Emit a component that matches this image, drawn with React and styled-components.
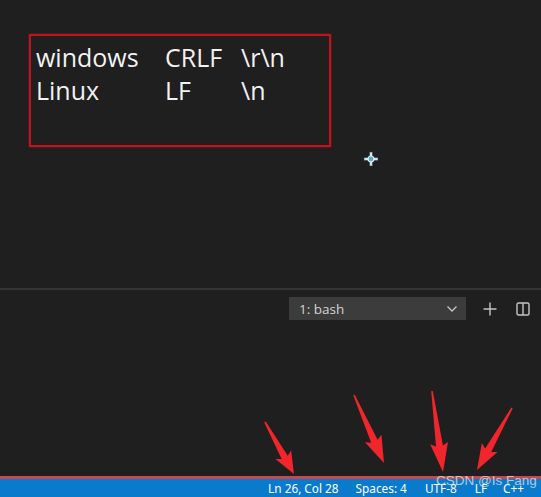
import React from "react";
import styled, { createGlobalStyle } from "styled-components";

const Global = createGlobalStyle`
  html, body { margin: 0; padding: 0; background: #1f1f1f; }
  #root { height: 100vh; }
`;

const Screen = styled.div`
  position: relative;
  height: 100vh;
  display: flex;
  flex-direction: column;
  background: #1f1f1f;
  overflow: hidden;
`;

const Editor = styled.div`
  height: 288px;
  padding: 34px 0 0 29px;
  box-sizing: border-box;
`;

const NoteBox = styled.div`
  width: 302px;
  height: 113px;
  box-sizing: border-box;
  border: 2px solid #c4121c;
  box-shadow: 0 0 2px rgba(200, 20, 30, 0.6);
  padding: 5px 0 0 5px;
  display: grid;
  grid-template-columns: 129px 76px auto;
  grid-auto-rows: 33px;
  font-family: "Open Sans", "Noto Sans", sans-serif;
  font-size: 25px;
  color: #f2f2f2;
  line-height: 33px;
`;

const Panel = styled.div`
  flex: 1;
  border-top: 2px solid #353535;
  display: flex;
  flex-direction: column;
`;

const Toolbar = styled.div`
  display: flex;
  align-items: center;
  justify-content: flex-end;
  padding: 7px 10px 0 0;
`;

const Dropdown = styled.div`
  width: 177px;
  height: 23px;
  background: #3c3c3c;
  display: flex;
  align-items: center;
  justify-content: space-between;
  padding: 0 8px 0 10px;
  box-sizing: border-box;
  font-family: "Open Sans", "Noto Sans", sans-serif;
  font-size: 13.5px;
  color: #d4d4d4;
  margin-right: 16px;
`;

const IconBtn = styled.div`
  width: 16px;
  height: 16px;
  display: flex;
  align-items: center;
  justify-content: center;
  margin-left: ${(p) => p.gap || 0}px;
`;

const StatusBar = styled.div`
  height: 18px;
  border-top: 3px solid #c8474c;
  background: #0a7acc;
  display: flex;
  align-items: center;
  justify-content: flex-end;
  padding-right: 17px;
  font-family: "Noto Sans", "Open Sans", sans-serif;
  font-size: 11.8px;
  color: #ffffff;
`;

const StatusItem = styled.span`
  margin-left: ${(p) => p.gap}px;
  white-space: nowrap;
`;

const Watermark = styled.div`
  position: absolute;
  left: 436px;
  top: 473px;
  font-family: "Liberation Sans", Arial, sans-serif;
  font-size: 13.5px;
  color: rgba(230, 230, 230, 0.75);
  white-space: nowrap;
`;

const Overlay = styled.svg`
  position: absolute;
  left: 0;
  top: 0;
  pointer-events: none;
`;

const Arrow = ({ tail, tip }) => {
  const dx = tip[0] - tail[0];
  const dy = tip[1] - tail[1];
  const L = Math.hypot(dx, dy);
  const ang = (Math.atan2(dy, dx) * 180) / Math.PI;
  const h = L * 0.68;
  const pts = [
    [0, -0.8],
    [h, -3.5],
    [h - 3, -9],
    [L, 0],
    [h - 3, 9],
    [h, 3.5],
    [0, 0.8],
  ]
    .map((p) => p.join(","))
    .join(" ");
  return (
    <polygon
      points={pts}
      fill="#f0262c"
      transform={`translate(${tail[0]} ${tail[1]}) rotate(${ang})`}
    />
  );
};

const Cursor = () => (
  <g transform="translate(371 159)">
    <rect x="-7" y="-1.5" width="14" height="3" fill="#cfe6ee" stroke="#2a3a40" strokeWidth="0.6" />
    <rect x="-1.5" y="-7" width="3" height="14" fill="#cfe6ee" stroke="#2a3a40" strokeWidth="0.6" />
    <circle r="3" fill="#5fa8c0" stroke="#e6f4f8" strokeWidth="1.2" />
  </g>
);

export default function App() {
  return (
    <Screen>
      <Global />
      <Editor>
        <NoteBox>
          <span>windows</span>
          <span>CRLF</span>
          <span>\r\n</span>
          <span>Linux</span>
          <span>LF</span>
          <span>\n</span>
        </NoteBox>
      </Editor>
      <Panel>
        <Toolbar>
          <Dropdown>
            <span>1: bash</span>
            <svg width="12" height="8" viewBox="0 0 12 8">
              <path d="M1.5 1.5 L6 6 L10.5 1.5" fill="none" stroke="#c5c5c5" strokeWidth="1.3" />
            </svg>
          </Dropdown>
          <IconBtn>
            <svg width="16" height="16" viewBox="0 0 16 16">
              <path d="M8 1.5 V14.5 M1.5 8 H14.5" stroke="#c5c5c5" strokeWidth="1.4" />
            </svg>
          </IconBtn>
          <IconBtn gap={17}>
            <svg width="14" height="14" viewBox="0 0 14 14">
              <rect x="1" y="1" width="12" height="12" rx="1.5" fill="none" stroke="#c5c5c5" strokeWidth="1.4" />
              <path d="M7 1 V13" stroke="#c5c5c5" strokeWidth="1.4" />
            </svg>
          </IconBtn>
        </Toolbar>
      </Panel>
      <StatusBar>
        <StatusItem gap={0}>Ln 26, Col 28</StatusItem>
        <StatusItem gap={17}>Spaces: 4</StatusItem>
        <StatusItem gap={18}>UTF-8</StatusItem>
        <StatusItem gap={18}>LF</StatusItem>
        <StatusItem gap={16}>C++</StatusItem>
      </StatusBar>
      <Watermark>CSDN @Is Fang</Watermark>
      <Overlay width="541" height="497" viewBox="0 0 541 497">
        <Cursor />
        <Arrow tail={[265, 422]} tip={[294, 474]} />
        <Arrow tail={[354, 395]} tip={[384, 463]} />
        <Arrow tail={[432, 391]} tip={[443, 472]} />
        <Arrow tail={[512, 408]} tip={[477, 470]} />
      </Overlay>
    </Screen>
  );
}
